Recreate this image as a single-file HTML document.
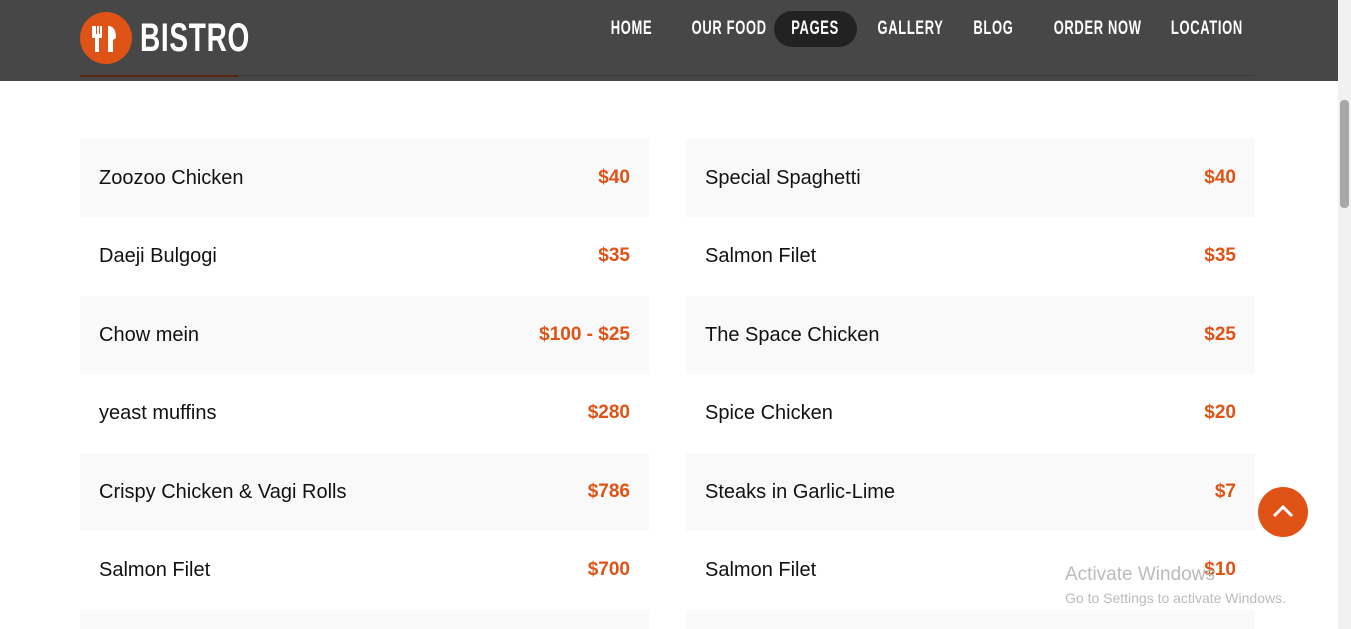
<!DOCTYPE html>
<html style="width:1351px;height:629px;overflow:hidden"><head><meta charset="utf-8"><style>
*{margin:0;padding:0;box-sizing:border-box}
body{width:1351px;height:629px;overflow:hidden;background:#fff;font-family:"Liberation Sans",sans-serif;position:relative}
.hdr{position:absolute;left:0;top:0;width:1338px;height:81px;background:#474747}
.logo{position:absolute;left:80px;top:12px;width:52px;height:52px;border-radius:50%;background:#e05316}
.logotext{position:absolute;left:140px;top:14px;color:#fff;font-weight:bold;font-size:40px;letter-spacing:1px;transform:scaleX(.7);transform-origin:left;line-height:48px;white-space:nowrap}
.uline{position:absolute;left:80px;top:75px;width:158px;height:2px;background:#5a2410}
.hline{position:absolute;left:238px;top:75px;width:1017px;height:1px;background:#3a3a3a}
.nav{position:absolute;top:11px;height:36px;line-height:36px;color:#fff;font-weight:bold;font-size:19px;letter-spacing:1px;text-align:center;white-space:nowrap}
.nav span{display:inline-block;transform:scaleX(.68)}
.pages{background:#222;border-radius:18px}
.row{position:absolute;height:78px;width:569px;font-size:20px;color:#111;line-height:78px;padding:0 19px;overflow:hidden}
.row.g{background:#f9f9f9}
.row b{position:absolute;right:19px;top:0;color:#e05316;font-weight:bold;font-size:19px}
.sb{position:absolute;right:0;top:0;width:13px;height:629px;background:#f1f1f1}
.thumb{position:absolute;right:2px;top:100px;width:9px;height:108px;background:#a8a8a8;border-radius:4px}
.up{position:absolute;left:1258px;top:487px;width:50px;height:50px;border-radius:50%;background:#e05316}
.win{position:absolute;left:1065px;color:#bbb;white-space:nowrap}
</style></head><body>
<div class="hdr">
<div class="logo"><svg width="52" height="52" viewBox="0 0 52 52"><path d="M12 14v12h3v14h4V26h3V14h-2v8h-1v-8h-2v8h-1v-8z M28 14c6 0 8 5 8 12l-3 2v12h-5z" fill="#fff"/></svg></div>
<div class="logotext">BISTRO</div>
<div class="uline"></div><div class="hline"></div>
<div class="nav" style="left:598px;width:66px"><span>HOME</span></div>
<div class="nav" style="left:674px;width:92px"><span>OUR FOOD</span></div>
<div class="nav pages" style="left:774px;width:83px"><span>PAGES</span></div>
<div class="nav" style="left:862px;width:86px"><span>GALLERY</span></div>
<div class="nav" style="left:964px;width:56px"><span>BLOG</span></div>
<div class="nav" style="left:1033px;width:108px"><span>ORDER NOW</span></div>
<div class="nav" style="left:1154px;width:92px"><span>LOCATION</span></div>
</div>
<div class="row g" style="left:80px;top:139px">Zoozoo Chicken<b>$40</b></div>
<div class="row" style="left:80px;top:217px">Daeji Bulgogi<b>$35</b></div>
<div class="row g" style="left:80px;top:296px">Chow mein<b>$100 - $25</b></div>
<div class="row" style="left:80px;top:374px">yeast muffins<b>$280</b></div>
<div class="row g" style="left:80px;top:453px">Crispy Chicken &amp; Vagi Rolls<b>$786</b></div>
<div class="row" style="left:80px;top:531px">Salmon Filet<b>$700</b></div>
<div class="row g" style="left:80px;top:610px;height:19px"></div>
<div class="row g" style="left:686px;top:139px">Special Spaghetti<b>$40</b></div>
<div class="row" style="left:686px;top:217px">Salmon Filet<b>$35</b></div>
<div class="row g" style="left:686px;top:296px">The Space Chicken<b>$25</b></div>
<div class="row" style="left:686px;top:374px">Spice Chicken<b>$20</b></div>
<div class="row g" style="left:686px;top:453px">Steaks in Garlic-Lime<b>$7</b></div>
<div class="row" style="left:686px;top:531px">Salmon Filet<b>$10</b></div>
<div class="row g" style="left:686px;top:610px;height:19px"></div>
<div class="up"><svg width="50" height="50" viewBox="0 0 50 50"><path d="M16 29l9-9 9 9" stroke="#fff" stroke-width="3" fill="none"/></svg></div>
<div class="win" style="top:564px;font-size:19px">Activate Windows</div>
<div class="win" style="top:590px;font-size:14px">Go to Settings to activate Windows.</div>
<div class="sb"><div class="thumb"></div></div>
</body></html>
